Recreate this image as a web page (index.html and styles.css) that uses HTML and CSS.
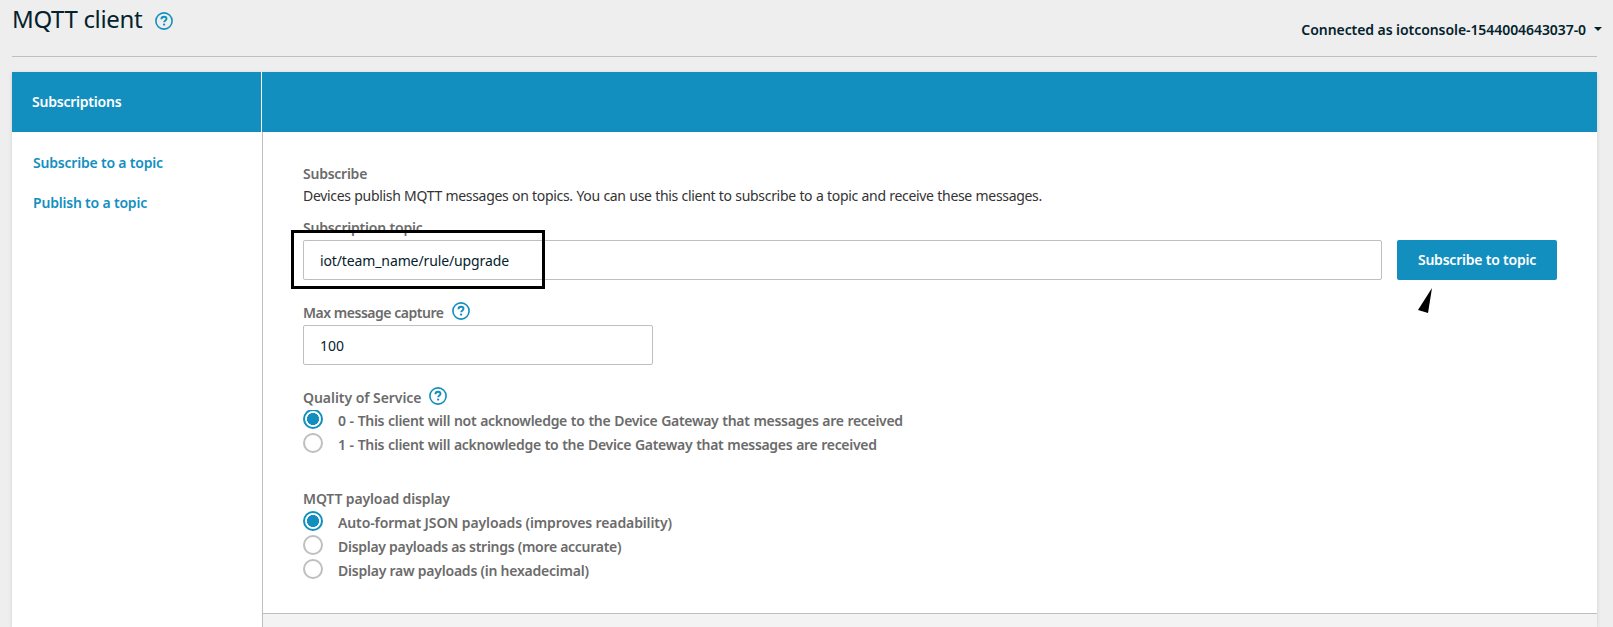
FILE: index.html
```
<!DOCTYPE html>
<html lang="en">
<head>
<meta charset="utf-8">
<title>MQTT client</title>
<link rel="stylesheet" href="styles.css">
</head>
<body>
<svg class="defs" aria-hidden="true">
  <symbol id="help" viewBox="0 0 18 18">
    <circle cx="9" cy="9" r="8.1" fill="none" stroke="currentColor" stroke-width="1.6"/>
    <path d="M6.4 7.2C6.5 5.6 7.6 4.8 9.1 4.8s2.4.8 2.4 2c0 1.6-2.3 1.7-2.3 3.4" fill="none" stroke="currentColor" stroke-width="1.9"/>
    <circle cx="9.1" cy="12.6" r="1.15" fill="currentColor"/>
  </symbol>
</svg>
<header class="page-header">
  <h1 class="title">MQTT client</h1>
  <svg class="help help-title"><use href="#help"/></svg>
  <div class="connection"><span class="connection-text">Connected as iotconsole-1544004643037-0</span><span class="caret"></span></div>
</header>
<main class="panel">
  <aside class="sidebar">
    <div class="bar bar-side"><span class="t-subs">Subscriptions</span></div>
    <nav class="nav">
      <a class="link t-link">Subscribe to a topic</a>
      <a class="link t-link">Publish to a topic</a>
    </nav>
  </aside>
  <section class="main">
    <div class="bar"></div>
    <div class="content">
      <h2 class="label label-first t-sub">Subscribe</h2>
      <p class="intro">Devices publish MQTT messages on topics. You can use this client to subscribe to a topic and receive these messages.</p>
      <label class="label t-topic">Subscription topic</label>
      <div class="topic-row">
        <div class="field field-topic"><span class="t-value">iot/team_name/rule/upgrade</span>
          <span class="highlight"></span>
        </div>
        <div class="button-wrap">
          <button class="button">Subscribe to topic</button>
          <svg class="pointer" viewBox="0 0 14 25"><path d="M14 0 10 25 0 22Z"/></svg>
        </div>
      </div>
      <div class="label-row label-max"><label class="label t-max">Max message capture</label><svg class="help"><use href="#help"/></svg></div>
      <div class="field field-max"><span>100</span></div>
      <div class="label-row label-qos"><label class="label t-qos">Quality of Service</label><svg class="help"><use href="#help"/></svg></div>
      <div class="options options-qos">
        <div class="option"><span class="radio checked"></span><span class="t-q0">0 - This client will not acknowledge to the Device Gateway that messages are received</span></div>
        <div class="option"><span class="radio"></span><span class="t-q1">1 - This client will acknowledge to the Device Gateway that messages are received</span></div>
      </div>
      <label class="label t-payload">MQTT payload display</label>
      <div class="options">
        <div class="option"><span class="radio checked"></span><span class="t-p0">Auto-format JSON payloads (improves readability)</span></div>
        <div class="option"><span class="radio"></span><span class="t-p1">Display payloads as strings (more accurate)</span></div>
        <div class="option"><span class="radio"></span><span class="t-p2">Display raw payloads (in hexadecimal)</span></div>
      </div>
    </div>
    <div class="results"></div>
  </section>
</main>
</body>
</html>
```
FILE: styles.css
```
* { box-sizing: border-box; }
html, body { height: 100%; }
body {
  margin: 0;
  padding: 0 16px 0 12px;
  display: flex;
  flex-direction: column;
  overflow: hidden;
  background: #eee;
  color: #16191f;
  font: 14px/24px "Noto Sans", "Open Sans", sans-serif;
  white-space: nowrap;
}
.defs { position: absolute; width: 0; height: 0; }
h1, h2, p { margin: 0; }

.page-header {
  display: flex;
  align-items: flex-start;
  flex: none;
  height: 57px;
  border-bottom: 1px solid #bfbfbf;
}
.title {
  margin: 3px 0 0;
  font-size: 24px;
  font-weight: 400;
  line-height: 32px;
  letter-spacing: -0.35px;
  color: #04222c;
}
.help { flex: none; width: 18px; height: 18px; color: #138fbf; }
.help-title { margin: 12px 0 0 13px; }
.connection {
  display: flex;
  align-items: center;
  gap: 8px;
  margin: 18px -5px 0 auto;
  font-weight: 600;
  letter-spacing: -0.068px;
  color: #04222c;
}
.caret {
  margin-top: -2px;
  border: 4px solid transparent;
  border-top-color: currentColor;
  border-bottom: 0;
}

.panel {
  display: flex;
  flex: 1;
  margin-top: 15px;
  background: #fff;
  box-shadow: 0 1px 4px rgba(0, 0, 0, .13);
}
.sidebar { display: flex; flex-direction: column; width: 251px; }
.bar { flex: none; height: 60px; background: #138fbf; }
.bar-side {
  display: flex;
  align-items: center;
  width: 250px;
  padding-left: 20px;
  border-right: 1px solid #fff;
  color: #fff;
  font-weight: 600;
}
.nav {
  display: flex;
  flex-direction: column;
  flex: 1;
  gap: 16px;
  padding: 19px 0 0 21px;
  border-right: 1px solid #bfbfbf;
}
.link { color: #138fbf; font-weight: 600; }
.main { display: flex; flex-direction: column; flex: 1; margin-left: -1px; }
.bar-side { position: relative; z-index: 1; }
.content { padding: 30px 40px 30px 41px; }
.label { display: block; height: 24px; font-size: 14px; font-weight: 600; color: #6b6b6b; }
.label-first { height: 22px; }
.intro { height: 32px; color: #333; letter-spacing: -0.32px; word-spacing: 0.3px; }

.topic-row { display: flex; gap: 15px; }
.field {
  display: flex;
  align-items: center;
  height: 40px;
  padding: 1px 16px 0;
  border: 1px solid #bfbfbf;
  border-radius: 2px;
  color: #04222c;
}
.field-topic { position: relative; flex: 1; }
.field-max { width: 350px; }
.highlight {
  position: absolute;
  top: -11px;
  left: -13px;
  width: 254px;
  height: 59px;
  border: 3px solid #000;
}
.button-wrap { position: relative; width: 160px; }
.button {
  width: 160px;
  height: 40px;
  padding: 0;
  border: 0;
  border-radius: 2px;
  background: #138fbf;
  color: #fff;
  font: 600 14px/24px "Noto Sans", sans-serif;
  letter-spacing: -0.21px;
}
.pointer { position: absolute; top: 48px; left: 21px; width: 14px; height: 25px; }

.label-row { display: flex; gap: 8px; }
.label-max { margin-top: 21px; }
.label-row .help { margin-top: 1px; }
.label-qos { margin-top: 21px; height: 23px; }
.options-qos { margin-bottom: 30px; }
.option { display: flex; gap: 15px; color: #6b6b6b; font-weight: 600; height: 24px; }
.radio {
  width: 20px;
  height: 20px;
  border: 2px solid #bfbfbf;
  border-radius: 50%;
}
.radio.checked {
  border-color: #138fbf;
  background: radial-gradient(circle, #138fbf 5.7px, #fff 6.3px);
}
.options-qos .checked { clip-path: inset(1px 0 0); }
.results { flex: 1; background: #f3f3f3; border-top: 1px solid #bfbfbf; margin-left: 1px; }

/* Tracking per string */
.t-subs { letter-spacing: -0.22px; }
.t-link { letter-spacing: -0.2px; }
.t-sub { letter-spacing: -0.25px; }
.t-topic { letter-spacing: -0.19px; }
.t-value { letter-spacing: -0.12px; }
.t-max { letter-spacing: -0.47px; }
.t-qos { letter-spacing: -0.05px; }
.t-q0 { letter-spacing: -0.31px; word-spacing: 0.55px; }
.t-q1 { letter-spacing: -0.31px; word-spacing: 0.55px; }
.t-payload { letter-spacing: -0.13px; }
.t-p0 { letter-spacing: -0.116px; }
.t-p1 { letter-spacing: -0.285px; }
.t-p2 { letter-spacing: -0.231px; }
```
